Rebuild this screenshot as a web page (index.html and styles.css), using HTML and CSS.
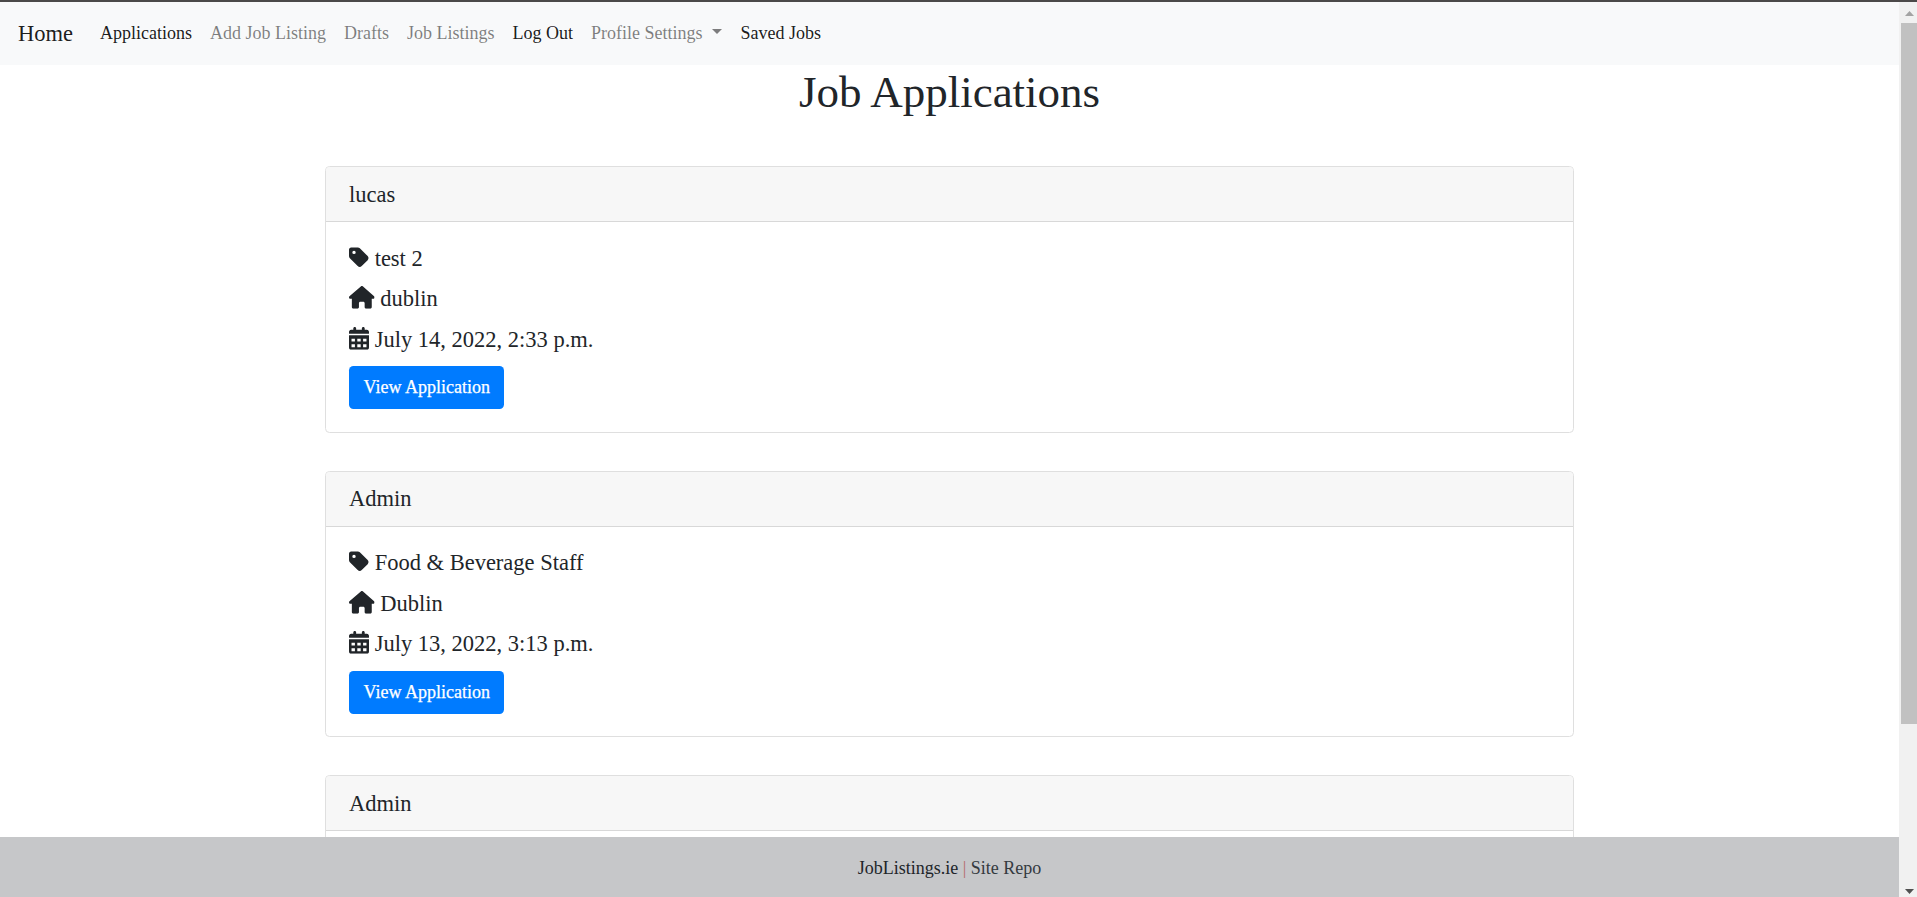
FILE: index.html
```html
<!DOCTYPE html>
<html lang="en">
<head>
<meta charset="utf-8">
<title>Job Applications</title>
<link rel="stylesheet" href="styles.css">
</head>
<body>
<svg class="defs" aria-hidden="true">
  <symbol id="tag" viewBox="0 0 448 512"><path d="M0 80V229.5c0 17 6.7 33.3 18.7 45.3l176 176c25 25 65.5 25 90.5 0L418.7 317.3c25-25 25-65.5 0-90.5l-176-176c-12-12-28.3-18.7-45.3-18.7H48C21.5 32 0 53.5 0 80zm112 26a38 38 0 1 1 0 76 38 38 0 1 1 0-76z"/></symbol>
  <symbol id="house" viewBox="0 0 576 512"><path d="M575.8 255.5c0 18-15 32.1-32 32.1h-32l.7 160.2c0 2.7-.2 5.4-.5 8.1V472c0 22.1-17.9 40-40 40H456c-1.1 0-2.2 0-3.3-.1c-1.4 .1-2.8 .1-4.2 .1H416 392c-22.1 0-40-17.9-40-40V448 384c0-17.7-14.3-32-32-32H256c-17.7 0-32 14.3-32 32v64 24c0 22.1-17.9 40-40 40H160 128.1c-1.5 0-3-.1-4.5-.2c-1.2 .1-2.4 .2-3.6 .2H104c-22.1 0-40-17.9-40-40V360c0-.9 0-1.900 .1-2.800V287.600H32c-18 0-32-14-32-32.100c0-9 3-17 10-24L266.400 8c7-7 15-8 22-8s15 2 21 7L564.800 231.500c8 7 12 15 11 24z"/></symbol>
  <symbol id="calendar" viewBox="0 0 448 512"><path fill-rule="evenodd" d="M128 0c17.700 0 32 14.300 32 32V64H288V32c0-17.700 14.300-32 32-32s32 14.300 32 32V64h48c26.500 0 48 21.500 48 48v40H0V112C0 85.500 21.500 64 48 64H96V32c0-17.700 14.300-32 32-32zM0 188H448V464c0 26.500-21.500 48-48 48H48c-26.500 0-48-21.500-48-48zM56 262v66h76v-66zM186 262v66h76v-66zM316 262v66h76v-66zM56 386v66h76v-66zM186 386v66h76v-66zM316 386v66h76v-66z"/></symbol>
</svg>
<div class="window">
  <div class="page">
    <nav class="navbar">
      <a class="brand">Home</a>
      <a class="link active">Applications</a>
      <a class="link">Add Job Listing</a>
      <a class="link">Drafts</a>
      <a class="link">Job Listings</a>
      <a class="link active">Log Out</a>
      <a class="link dropdown">Profile Settings</a>
      <a class="link active">Saved Jobs</a>
    </nav>
    <main class="content">
      <h1 class="title">Job Applications</h1>
      <section class="card">
        <h5 class="card-header">lucas</h5>
        <div class="card-body">
          <p class="row"><svg class="icon"><use href="#tag"/></svg> test 2</p>
          <p class="row"><svg class="icon wide"><use href="#house"/></svg> dublin</p>
          <p class="row"><svg class="icon"><use href="#calendar"/></svg> July 14, 2022, 2:33 p.m.</p>
          <a class="button">View Application</a>
        </div>
      </section>
      <section class="card">
        <h5 class="card-header">Admin</h5>
        <div class="card-body">
          <p class="row"><svg class="icon"><use href="#tag"/></svg> Food &amp; Beverage Staff</p>
          <p class="row"><svg class="icon wide"><use href="#house"/></svg> Dublin</p>
          <p class="row"><svg class="icon"><use href="#calendar"/></svg> July 13, 2022, 3:13 p.m.</p>
          <a class="button">View Application</a>
        </div>
      </section>
      <section class="card">
        <h5 class="card-header">Admin</h5>
        <div class="card-body"></div>
      </section>
    </main>
    <footer class="footer"><span class="site">JobListings.ie</span><span class="bar">|</span><span class="repo">Site Repo</span></footer>
  </div>
  <div class="scrollbar">
    <svg class="arrow up" viewBox="0 0 9 5"><path d="M4.500 0L9 5H0z"/></svg>
    <div class="thumb"></div>
    <svg class="arrow down" viewBox="0 0 9 5"><path d="M0 0H9L4.500 5z"/></svg>
  </div>
</div>
</body>
</html>
```
FILE: styles.css
```css
* { box-sizing: border-box; }
body { margin: 0; overflow: hidden; color: #212529; background: #fff; font: 18px/27px "Liberation Serif", "Times New Roman", serif; }
.defs { display: none; }
.window { display: grid; grid-template-columns: 1fr 18px; height: 897px; border-top: 2px solid #4b4949; }
.page { display: flex; flex-direction: column; min-width: 0; height: 895px; }
.navbar { display: flex; align-items: center; flex: none; height: 63px; padding: 0 18px; gap: 18px; background: #f8f9fa; color: rgba(0,0,0,.5); }
.brand { font-size: 22.5px; margin-right: 9px; color: rgba(0,0,0,.9); }
.active { color: rgba(0,0,0,.9); }
.dropdown::after { content: ""; display: inline-block; margin-left: 9.5px; margin-right: .5px; vertical-align: 5px; border: 5px solid transparent; border-top-color: currentColor; border-bottom: 0; }
.content { flex: 1; min-height: 0; overflow: hidden; }
.title { margin: 0 0 47px; font-size: 45px; line-height: 54px; font-weight: 400; text-align: center; }
.card { width: 1249px; margin: 0 auto 38px; border: 1px solid #dfdfdf; border-radius: 4.5px; overflow: hidden; }
.card-header { margin: 0; padding: 13.5px 23px; height: 55px; font-size: 22.5px; line-height: 27px; font-weight: 400; background: #f7f7f7; border-bottom: 1px solid #d8d8d8; }
.card-body { padding: 22.5px 23px; }
.row { margin: 0; height: 40.5px; font-size: 22.5px; line-height: 27px; white-space: nowrap; }
.icon { width: 20px; height: 22.8px; vertical-align: -3.2px; fill: currentColor; }
.wide { width: 25.6px; }
.button { display: inline-block; height: 43px; padding: 8px 14.5px; border-radius: 4.5px; background: #007bff; color: #fff; vertical-align: top; -webkit-text-stroke: .25px #fff; }
.footer { display: flex; flex: none; align-items: center; justify-content: center; height: 60px; padding-top: 3px; gap: 4.5px; background: #c6c7c9; }
.bar { color: #b56d6d; }
.repo { color: #343a40; }
.scrollbar { display: flex; flex-direction: column; align-items: center; background: #f1f1f1; height: 895px; padding: 9px 0 3px; }
.arrow { width: 9px; height: 5px; margin-left: 3px; }
.up { fill: #a3a3a3; }
.down { fill: #505050; margin-top: auto; }
.thumb { width: 16px; height: 701px; margin: 7px 0 0 2px; background: #c1c1c1; }
```
